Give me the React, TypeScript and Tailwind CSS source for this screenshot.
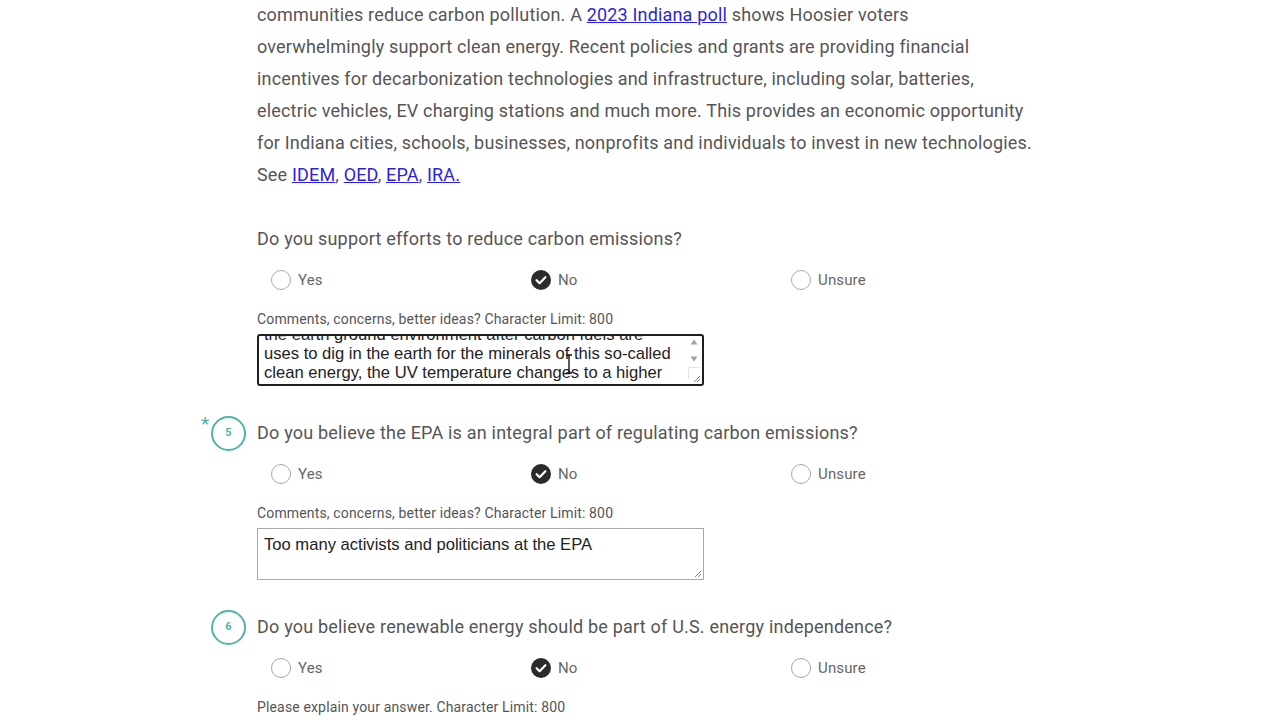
import React from "react";

const TEAL = "#4db6a8";

function Radio({ label, checked }: { label: string; checked?: boolean }) {
  return (
    <div className="flex items-center gap-[7px] pl-[14px] h-[24px]">
      {checked ? (
        <svg width="20" height="20" viewBox="0 0 20 20" aria-hidden="true">
          <circle cx="10" cy="10" r="10" fill="#2b2b2b" />
          <path d="M5.6 10.2l3 3 5.8-6" fill="none" stroke="#fff" strokeWidth="2.2" strokeLinecap="round" strokeLinejoin="round" />
        </svg>
      ) : (
        <span className="block h-[20px] w-[20px] rounded-full border-[1.5px] border-[#a8a8a8] bg-white" />
      )}
      <span className="text-[15px] tracking-[0.15px] text-[#666]">{label}</span>
    </div>
  );
}

function RadioRow() {
  return (
    <div className="mt-[15px] grid w-[780px] grid-cols-3">
      <Radio label="Yes" />
      <Radio label="No" checked />
      <Radio label="Unsure" />
    </div>
  );
}

function Heading({ num, required, text }: { num?: number; required?: boolean; text: string }) {
  if (!num) {
    return <h3 className="h-[28px] text-[18px] leading-[28px] tracking-[0.2px] text-[#555]">{text}</h3>;
  }
  return (
    <div className="-ml-[46px] flex h-[28px] items-center">
      <div className="relative mr-[11px] flex h-[35px] w-[35px] items-center justify-center rounded-full border-2 border-[#4db6a8]">
        {required && (
          <span className="absolute -left-[12px] -top-[4px] text-[19px] leading-none" style={{ color: TEAL }}>
            *
          </span>
        )}
        <span className="text-[11px] font-bold text-[#4db6a8]">{num}</span>
      </div>
      <h3 className="text-[18px] leading-[28px] tracking-[0.2px] text-[#555]">{text}</h3>
    </div>
  );
}

function Label({ text }: { text: string }) {
  return <div className="mt-[17px] h-[20px] text-[14px] leading-[20px] tracking-[0.15px] text-[#555]">{text}</div>;
}

const areaFont = { fontFamily: '"Liberation Sans", Arial, sans-serif' };

export default function App() {
  return (
    <div className="min-h-[720px] w-[1280px] overflow-hidden bg-white" style={{ fontFamily: "Roboto, 'Noto Sans', sans-serif" }}>
      <div className="ml-[257px] w-[800px]">
        {/* Intro paragraph */}
        <p className="-mt-px text-[18px] leading-[32px] tracking-[0.17px] text-[#555]">
          communities reduce carbon pollution. A{" "}
          <a href="#" className="text-[#2d1fdc] underline">2023 Indiana poll</a> shows Hoosier voters
          <br />
          overwhelmingly support clean energy. Recent policies and grants are providing financial
          <br />
          incentives for decarbonization technologies and infrastructure, including solar, batteries,
          <br />
          electric vehicles, EV charging stations and much more. This provides an economic opportunity
          <br />
          for Indiana cities, schools, businesses, nonprofits and individuals to invest in new technologies.
          <br />
          See <a href="#" className="text-[#2d1fdc] underline">IDEM</a>,{" "}
          <a href="#" className="text-[#2d1fdc] underline">OED</a>,{" "}
          <a href="#" className="text-[#2d1fdc] underline">EPA</a>,{" "}
          <a href="#" className="text-[#2d1fdc] underline">IRA.</a>
        </p>

        {/* Question 4 */}
        <div className="mt-[34px]">
          <Heading text="Do you support efforts to reduce carbon emissions?" />
          <RadioRow />
          <Label text="Comments, concerns, better ideas? Character Limit: 800" />
          <div className="relative mt-[5px] flex h-[52px] w-[447px] overflow-hidden rounded-[3px] border-2 border-[#1f1f1f] bg-white">
            <div className="flex-1 overflow-hidden pl-[5px]">
              <div className="-mt-[11px] whitespace-nowrap text-[16.6px] leading-[19px] text-[#222]" style={areaFont}>
                the earth ground environment after carbon fuels are
                <br />
                uses to dig in the earth for the minerals of this so-called
                <br />
                clean energy, the UV temperature changes to a higher
              </div>
            </div>
            <div className="flex w-[16px] shrink-0 flex-col items-center pt-[3px]">
              <svg width="8" height="6" viewBox="0 0 8 6" aria-hidden="true">
                <path d="M4 0.5L7.5 5.5H0.5z" fill="#a3a3a3" />
              </svg>
              <div className="h-[11px]" />
              <svg width="8" height="6" viewBox="0 0 8 6" aria-hidden="true">
                <path d="M4 5.5L7.5 0.5H0.5z" fill="#a3a3a3" />
              </svg>
              <div className="mt-[5px] h-[12px] w-[12px] border-t border-l border-[#e4e4e4]" />
            </div>
            <svg className="absolute bottom-[1px] right-[1px]" width="8" height="8" viewBox="0 0 8 8" aria-hidden="true">
              <path d="M7 1L1 7M7 4L4 7" stroke="#888" strokeWidth="1" />
            </svg>
            {/* I-beam cursor */}
            <svg className="absolute left-[306px] top-[18px]" width="8" height="20" viewBox="0 0 8 20" aria-hidden="true">
              <path d="M1 1h6M4 1v18M1 19h6" stroke="#111" strokeWidth="1.4" fill="none" />
            </svg>
          </div>
        </div>

        {/* Question 5 */}
        <div className="mt-[33px]">
          <Heading num={5} required text="Do you believe the EPA is an integral part of regulating carbon emissions?" />
          <RadioRow />
          <Label text="Comments, concerns, better ideas? Character Limit: 800" />
          <div className="relative mt-[5px] h-[52px] w-[447px] border border-[#a9a9a9] bg-white px-[6px] pt-[6px]">
            <div className="text-[16.6px] leading-[19px] text-[#222]" style={areaFont}>
              Too many activists and politicians at the EPA
            </div>
            <svg className="absolute bottom-[1px] right-[1px]" width="8" height="8" viewBox="0 0 8 8" aria-hidden="true">
              <path d="M7 1L1 7M7 4L4 7" stroke="#888" strokeWidth="1" />
            </svg>
          </div>
        </div>

        {/* Question 6 */}
        <div className="mt-[33px]">
          <Heading num={6} text="Do you believe renewable energy should be part of U.S. energy independence?" />
          <RadioRow />
          <Label text="Please explain your answer. Character Limit: 800" />
        </div>
      </div>
    </div>
  );
}
